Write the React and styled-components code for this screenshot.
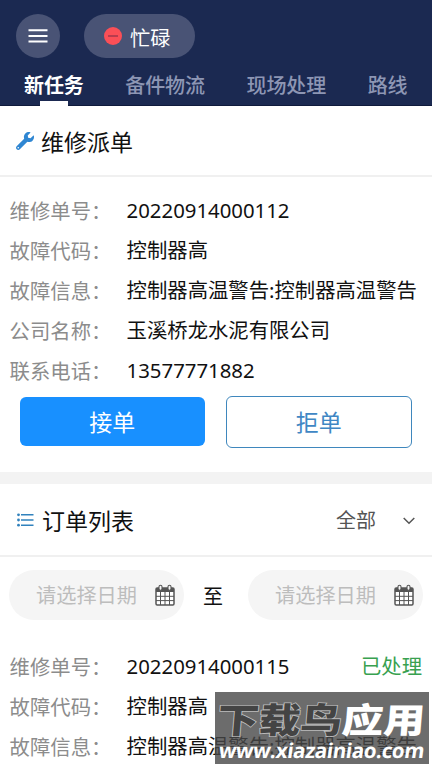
import * as React from 'react';
import styled, { createGlobalStyle } from 'styled-components';
import { FaWrench } from 'react-icons/fa';

const GlobalStyle = createGlobalStyle`
  * {
    box-sizing: border-box;
  }
  body {
    margin: 0;
    background: #fff;
    color: #111;
    font-family: 'Noto Sans', 'Noto Sans CJK SC', sans-serif;
  }
  button {
    font-family: inherit;
  }
`;

const Screen = styled.div`
  position: relative;
  width: 432px;
  height: 768px;
  overflow: hidden;
  background: #fff;
`;

const Header = styled.header`
  height: 106px;
  background: #1b2951;
  border-bottom: 1px solid #0f1a3c;
`;

const HeaderBar = styled.div`
  display: flex;
  gap: 24px;
  padding: 14px 0 0 16px;
`;

const MenuButton = styled.button`
  display: flex;
  align-items: center;
  justify-content: center;
  width: 44px;
  height: 44px;
  padding: 0;
  border: none;
  border-radius: 50%;
  background: #495375;
`;

const StatusButton = styled.button`
  display: flex;
  align-items: center;
  width: 111px;
  height: 44px;
  padding: 0 0 0 20px;
  gap: 8px;
  border: none;
  border-radius: 22px;
  background: #495375;
  color: #fff;
  font-size: 20.2px;
`;

const StatusText = styled.span`
  padding-top: 3px;
`;

const Tabs = styled.nav`
  display: flex;
  gap: 41.6px;
  height: 47px;
  padding: 10px 0 0 24px;
`;

const Tab = styled.div`
  display: flex;
  flex-direction: column;
  align-items: center;
  flex: none;
  height: 38px;
  color: ${({ $active }) => ($active ? '#fff' : '#8d96b4')};
  font-size: 20px;
  font-weight: ${({ $active }) => ($active ? 700 : 500)};
  line-height: 35px;
  letter-spacing: -0.1px;
`;

const TabMarker = styled.div`
  width: 28px;
  height: 6px;
  margin-top: -2px;
  background: #fff;
`;

const SectionHead = styled.div`
  display: flex;
  align-items: center;
  height: ${({ $height }) => $height}px;
  padding: 0 17px 0 ${({ $indent }) => $indent}px;
  border-bottom: 2px solid #f0f0f0;
`;

const SectionTitle = styled.h2`
  flex: 1;
  margin: 2px 0 0 ${({ $gap }) => $gap}px;
  color: #111;
  font-size: 23px;
  font-weight: 400;
  line-height: 34px;
`;

const Filter = styled.div`
  display: flex;
  align-items: center;
  gap: 27px;
  margin-top: 3px;
  color: #555;
  font-size: 20px;
  line-height: 34px;
`;

const Details = styled.div`
  padding-top: ${({ $top }) => $top}px;
`;

const DetailRow = styled.div`
  display: flex;
  height: 40px;
  padding: 0 10px 0 9.6px;
  font-size: 20.35px;
  line-height: 40px;
  white-space: nowrap;
`;

const Label = styled.span`
  flex: none;
  width: 117px;
  color: #8c8c8c;
  line-height: 42px;
`;

const Value = styled.span`
  flex: 1;
`;

const Done = styled.span`
  color: #38a150;
`;

const Actions = styled.div`
  display: flex;
  gap: 21px;
  height: 82px;
  padding: 6px 20px 0;
`;

const ActionButton = styled.button`
  flex: 1;
  height: ${({ $primary }) => ($primary ? 49 : 52)}px;
  margin-top: ${({ $primary }) => ($primary ? 1 : 0)}px;
  padding: 0;
  border: ${({ $primary }) => ($primary ? 'none' : '1px solid #3f87bd')};
  border-radius: 6px;
  background: ${({ $primary }) => ($primary ? '#1890ff' : '#fff')};
  color: ${({ $primary }) => ($primary ? '#fff' : '#3f87c4')};
  font-size: 23px;
  line-height: 48px;
`;

const Divider = styled.div`
  height: 12px;
  background: #f3f3f3;
`;

const DateRange = styled.div`
  display: flex;
  align-items: center;
  justify-content: space-between;
  height: 63px;
  padding: 13px 9px 0;
  font-size: 20px;
`;

const RangeText = styled.span`
  margin-left: -6px;
`;

const DateInput = styled.div`
  display: flex;
  align-items: center;
  justify-content: space-between;
  width: 175px;
  height: 50px;
  padding: 0 9px 0 27px;
  border-radius: 25px;
  background: #f5f5f5;
  color: #bdbdbd;
  font-size: 20.2px;
  line-height: 50px;
`;

const Watermark = styled.div`
  position: absolute;
  left: 215px;
  top: 692px;
  width: 214px;
  height: 72px;
  background: rgba(71, 71, 71, 0.8);
  color: #fff;
  overflow: hidden;
  white-space: nowrap;
`;

const WatermarkName = styled.div`
  height: 46px;
  padding-left: 3px;
  font-family: 'Noto Sans CJK SC', sans-serif;
  font-size: 41.5px;
  font-weight: 900;
  line-height: 54px;
  transform: scaleY(0.84) skewX(-4deg);
`;

const WatermarkDark = styled.span`
  color: #444;
  -webkit-text-stroke: 2px #bbb;
  paint-order: stroke fill;
`;

const WatermarkUrl = styled.div`
  padding-left: 4px;
  font-family: 'Open Sans', sans-serif;
  font-size: 20.5px;
  font-weight: 700;
  letter-spacing: -0.35px;
  line-height: 24px;
  transform: skewX(-8deg);
`;

const MenuIcon = () => (
  <svg width="20" height="16" viewBox="0 0 20 16" stroke="#fff" strokeWidth="2">
    <path d="M.5 2.2h19M.5 8h19M.5 13.6h19" />
  </svg>
);

const BusyIcon = () => (
  <svg width="18" height="18" viewBox="0 0 18 18">
    <circle cx="9" cy="9" r="9" fill="#fb4f57" />
    <path d="M4 9h10" stroke="#8c3048" strokeWidth="1.2" />
  </svg>
);

const ListIcon = () => (
  <svg width="17" height="14" viewBox="0 0 17 14" fill="#3182bd">
    <circle cx="1.5" cy="1.8" r="1.4" />
    <circle cx="1.5" cy="7" r="1.4" />
    <circle cx="1.5" cy="12.2" r="1.4" />
    <path d="M4 1h12.5v1.6H4zM4 6.2h12.5v1.6H4zM4 11.4h12.5V13H4z" />
  </svg>
);

const ChevronIcon = () => (
  <svg width="12" height="8" viewBox="0 0 12 8" fill="none" stroke="#555" strokeWidth="1.5">
    <path d="M.7 1l5.3 5.3L11.3 1" />
  </svg>
);

const CalendarIcon = () => (
  <svg width="20" height="22" viewBox="0 0 20 22" fill="none" stroke="#555">
    <rect x="1" y="4" width="18" height="17" rx="1.2" fill="#fff" strokeWidth="1.5" />
    <path d="M1 4h18v4H1z" fill="#555" stroke="none" />
    <path d="M5.5 8v13M10 8v13M14.5 8v13M1 12.3h18M1 16.6h18" strokeWidth="1" />
    <rect x="4" y="1.2" width="3" height="5" rx="1.5" fill="#f5f5f5" strokeWidth="1.1" />
    <rect x="13" y="1.2" width="3" height="5" rx="1.5" fill="#f5f5f5" strokeWidth="1.1" />
  </svg>
);

const tabs = ['新任务', '备件物流', '现场处理', '路线'];

const task = [
  ['维修单号', '20220914000112'],
  ['故障代码', '控制器高'],
  ['故障信息', '控制器高温警告:控制器高温警告'],
  ['公司名称', '玉溪桥龙水泥有限公司'],
  ['联系电话', '13577771882']
];

const order = [
  ['维修单号', '20220914000115', '已处理'],
  ['故障代码', '控制器高'],
  ['故障信息', '控制器高温警告:控制器高温警告']
];

const DetailList = ({ rows, top }) => (
  <Details $top={top}>
    {rows.map(([label, value, status]) => (
      <DetailRow key={label}>
        <Label>{label}：</Label>
        <Value>{value}</Value>
        {status && <Done>{status}</Done>}
      </DetailRow>
    ))}
  </Details>
);

const App = () => (
  <Screen>
    <GlobalStyle />
    <Header>
      <HeaderBar>
        <MenuButton>
          <MenuIcon />
        </MenuButton>
        <StatusButton>
          <BusyIcon />
          <StatusText>忙碌</StatusText>
        </StatusButton>
      </HeaderBar>
      <Tabs>
        {tabs.map((tab, index) => (
          <Tab key={tab} $active={index === 0}>
            {tab}
            {index === 0 && <TabMarker />}
          </Tab>
        ))}
      </Tabs>
    </Header>

    <SectionHead $height={71} $indent={16}>
      <FaWrench size={18} color="#2f86d2" />
      <SectionTitle $gap={7}>维修派单</SectionTitle>
    </SectionHead>
    <DetailList rows={task} top={13} />
    <Actions>
      <ActionButton $primary>接单</ActionButton>
      <ActionButton>拒单</ActionButton>
    </Actions>

    <Divider />

    <SectionHead $height={73} $indent={17}>
      <ListIcon />
      <SectionTitle $gap={8}>订单列表</SectionTitle>
      <Filter>
        全部
        <ChevronIcon />
      </Filter>
    </SectionHead>
    <DateRange>
      <DateInput>
        请选择日期
        <CalendarIcon />
      </DateInput>
      <RangeText>至</RangeText>
      <DateInput>
        请选择日期
        <CalendarIcon />
      </DateInput>
    </DateRange>
    <DetailList rows={order} top={26} />

    <Watermark>
      <WatermarkName>
        <WatermarkDark>下载鸟</WatermarkDark>应用
      </WatermarkName>
      <WatermarkUrl>www.xiazainiao.com</WatermarkUrl>
    </Watermark>
  </Screen>
);

export default App;
